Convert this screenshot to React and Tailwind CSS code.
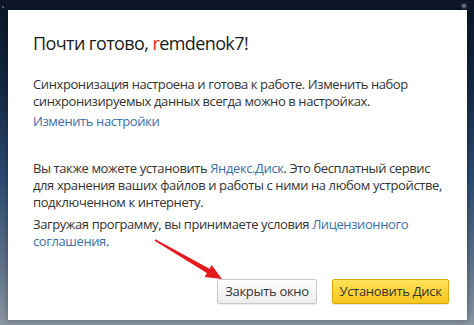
export default function App() {
  return (
    <div className="relative w-[474px] h-[325px] overflow-hidden bg-[linear-gradient(180deg,#0b1526_0%,#142640_25%,#2b4a70_55%,#5b6f88_80%,#8a95a2_100%)] font-['Open_Sans',sans-serif]">
      <div className="absolute left-[2px] top-[6px] w-[2px] h-[2px] bg-white/40 rounded-full" />
      <div className="absolute left-[462px] top-[4px] w-[4px] h-[4px] bg-white/60 rounded-full blur-[1px]" />

      <div className="ml-[8px] mt-[10px] w-[459px] h-[310px] bg-white shadow-[0_0_6px_rgba(0,0,0,0.35)] pl-[25px] pt-[21px] flex flex-col">
        <h1 className="text-[18px] leading-[24px] text-[#1b1b1b] font-normal tracking-[-0.6px]">
          Почти готово, <span className="text-[#e52620]">r</span>emdenok7!
        </h1>

        <div className="mt-[21px] text-[13px] leading-[17px] text-[#333] tracking-[-0.4px] whitespace-nowrap">
          <p>Синхронизация настроена и готова к работе. Изменить набор</p>
          <p>синхронизируемых данных всегда можно в настройках.</p>
          <p className="mt-[3px] text-[#3a6fa8]">Изменить настройки</p>

          <p className="mt-[30px]">
            Вы также можете установить <span className="text-[#3a6fa8]">Яндекс.Диск</span>. Это бесплатный сервис
            <br />
            для хранения ваших файлов и работы с ними на любом устройстве,
            <br />
            подключенном к интернету.
          </p>
          <p className="mt-[5px]">
            Загружая программу, вы принимаете условия <span className="text-[#3a6fa8]">Лицензионного</span>
            <br />
            <span className="text-[#3a6fa8]">соглашения</span>.
          </p>
        </div>

        <div className="mt-[29px] flex justify-end gap-[15px] pr-[18px] text-[13px] tracking-[-0.3px]">
          <button className="w-[100px] h-[25px] rounded-[2px] border border-[#c9c9c9] bg-[linear-gradient(180deg,#ffffff,#ececec)] text-[#333] shadow-[0_1px_1px_rgba(0,0,0,0.08)]">
            Закрыть окно
          </button>
          <button className="w-[117px] h-[25px] rounded-[2px] border border-[#d6a90c] bg-[linear-gradient(180deg,#ffe35a,#f7c51a)] text-[#333] shadow-[0_1px_1px_rgba(0,0,0,0.1)]">
            Установить Диск
          </button>
        </div>
      </div>

      <svg className="absolute left-0 top-0" width="474" height="325" viewBox="0 0 474 325">
        <polygon
          points="155.4,239.3 209.5,268.8 211.7,264.9 222,279 204.7,277.0 206.9,273.1 154.6,240.7"
          fill="#e3191d"
        />
      </svg>
    </div>
  );
}
